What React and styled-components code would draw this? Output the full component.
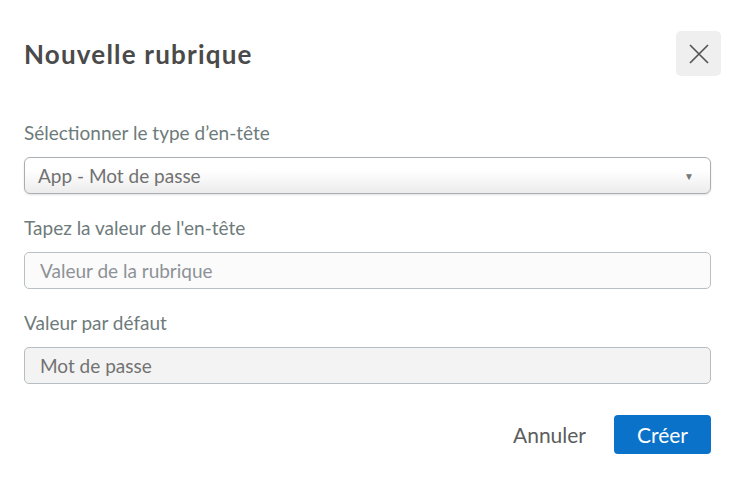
import React from 'react';
import styled, { createGlobalStyle } from 'styled-components';

const GlobalStyle = createGlobalStyle`
  body {
    margin: 0;
    background: #ffffff;
    font-family: Lato, "Liberation Sans", sans-serif;
  }
`;

const Dialog = styled.div`
  width: 737px;
  height: 483px;
  box-sizing: border-box;
  padding: 31px 26px 0 24px;
  background: #fff;
  display: flex;
  flex-direction: column;
`;

const Header = styled.div`
  display: flex;
  justify-content: space-between;
  align-items: center;
  margin-bottom: 46px;
`;

const Title = styled.h2`
  margin: 0;
  font-size: 26px;
  font-weight: 700;
  color: #4a4a4a;
  letter-spacing: 1.2px;
`;

const CloseButton = styled.button`
  width: 45px;
  height: 45px;
  border: none;
  border-radius: 5px;
  background: #efefef;
  display: flex;
  align-items: center;
  justify-content: center;
  padding: 0;
  margin-right: -10px;
  cursor: pointer;
`;

const Field = styled.div`
  display: flex;
  flex-direction: column;
  margin-bottom: 23px;
`;

const Label = styled.label`
  font-size: 19px;
  font-weight: 400;
  color: #6e7b7b;
  margin-bottom: 13px;
  line-height: 22px;
`;

const SelectBox = styled.div`
  height: 37px;
  box-sizing: border-box;
  border: 1px solid #a9aeb3;
  border-radius: 6px;
  background: linear-gradient(#ffffff 0%, #ffffff 35%, #ececec 100%);
  box-shadow: 0 1px 2px rgba(0, 0, 0, 0.12);
  display: flex;
  align-items: center;
  justify-content: space-between;
  padding: 0 16px 0 13px;
  font-size: 19px;
  font-weight: 400;
  color: #717171;
`;

const Arrow = styled.span`
  font-size: 10px;
  color: #777;
`;

const Input = styled.div`
  height: 37px;
  box-sizing: border-box;
  border: 1px solid ${(p) => (p.$disabled ? '#b7bcc0' : '#b8c0c6')};
  border-radius: 5px;
  background: ${(p) => (p.$disabled ? '#f3f3f3' : '#fbfbfc')};
  display: flex;
  align-items: center;
  padding: 0 15px;
  font-size: 19px;
  font-weight: 400;
  color: ${(p) => (p.$disabled ? '#727272' : '#8d9296')};
`;

const Footer = styled.div`
  display: flex;
  justify-content: flex-end;
  align-items: center;
  gap: 28px;
  margin-top: 8px;
`;

const TextButton = styled.button`
  border: none;
  background: none;
  font-family: inherit;
  font-size: 21px;
  font-weight: 400;
  color: #5d5d5d;
  padding: 0;
  cursor: pointer;
`;

const PrimaryButton = styled.button`
  width: 97px;
  height: 39px;
  border: none;
  border-radius: 4px;
  background: #0a73c9;
  color: #fff;
  font-family: inherit;
  font-size: 21px;
  font-weight: 400;
  cursor: pointer;
`;

const App = () => {
  return (
    <>
      <GlobalStyle />
      <Dialog>
        <Header>
          <Title>Nouvelle rubrique</Title>
          <CloseButton aria-label="Fermer">
            <svg width="22" height="20" viewBox="0 0 22 20">
              <path d="M2 1 L20 19 M20 1 L2 19" stroke="#555" strokeWidth="1.7" fill="none" />
            </svg>
          </CloseButton>
        </Header>
        <Field>
          <Label>Sélectionner le type d’en-tête</Label>
          <SelectBox>
            <span>App - Mot de passe</span>
            <Arrow>▼</Arrow>
          </SelectBox>
        </Field>
        <Field>
          <Label>Tapez la valeur de l'en-tête</Label>
          <Input>Valeur de la rubrique</Input>
        </Field>
        <Field>
          <Label>Valeur par défaut</Label>
          <Input $disabled>Mot de passe</Input>
        </Field>
        <Footer>
          <TextButton>Annuler</TextButton>
          <PrimaryButton>Créer</PrimaryButton>
        </Footer>
      </Dialog>
    </>
  );
};

export default App;
